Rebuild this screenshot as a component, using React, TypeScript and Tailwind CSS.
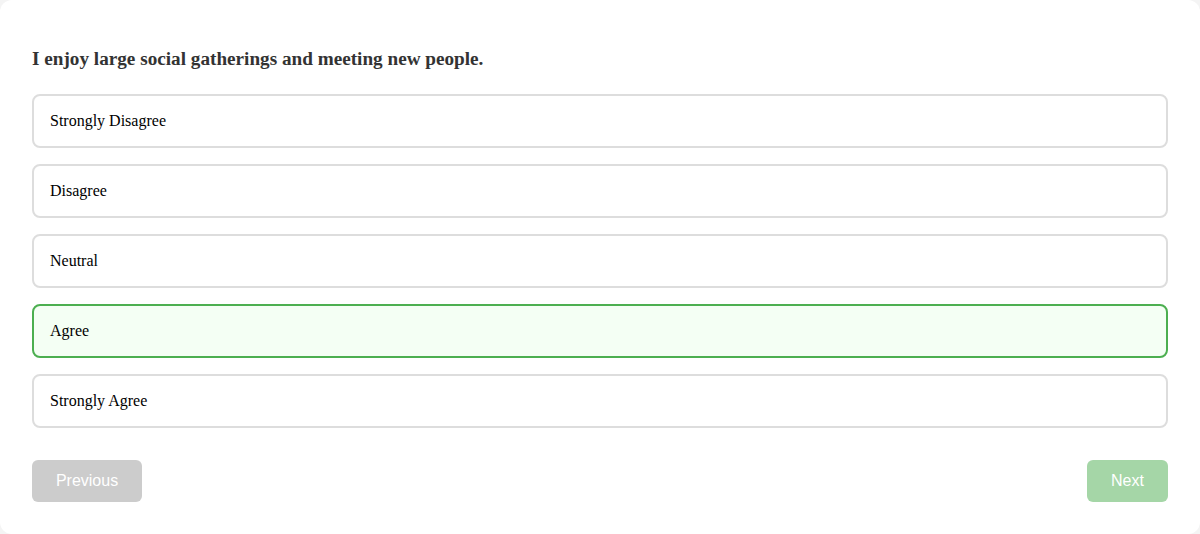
import React from "react";

const options = ["Strongly Disagree", "Disagree", "Neutral", "Agree", "Strongly Agree"];

export default function App() {
  const selected = "Agree";
  return (
    <div className="w-[1200px] h-[534px] bg-[#f4f4f4]">
      <div className="h-full bg-white rounded-xl px-8 pt-[47px] pb-8 flex flex-col" style={{ fontFamily: '"Liberation Serif", serif' }}>
        <h2 className="text-[19.2px] leading-[23px] font-bold text-[#333] mb-6">
          I enjoy large social gatherings and meeting new people.
        </h2>
        <div className="flex flex-col gap-4">
          {options.map((o) => (
            <div
              key={o}
              className={
                o === selected
                  ? "border-2 border-[#4caf50] bg-[#f4fff4] rounded-lg px-4 py-4 text-base leading-[18px] text-black"
                  : "border-2 border-[#dddddd] bg-white rounded-lg px-4 py-4 text-base leading-[18px] text-black"
              }
            >
              {o}
            </div>
          ))}
        </div>
        <div className="flex justify-between mt-8" style={{ fontFamily: '"Liberation Sans", Arial, sans-serif' }}>
          <button className="h-[42px] w-[110px] bg-[#cccccc] text-white rounded-md text-base">Previous</button>
          <button className="h-[42px] w-[81px] bg-[#a5d6a7] text-white rounded-md text-base">Next</button>
        </div>
      </div>
    </div>
  );
}
